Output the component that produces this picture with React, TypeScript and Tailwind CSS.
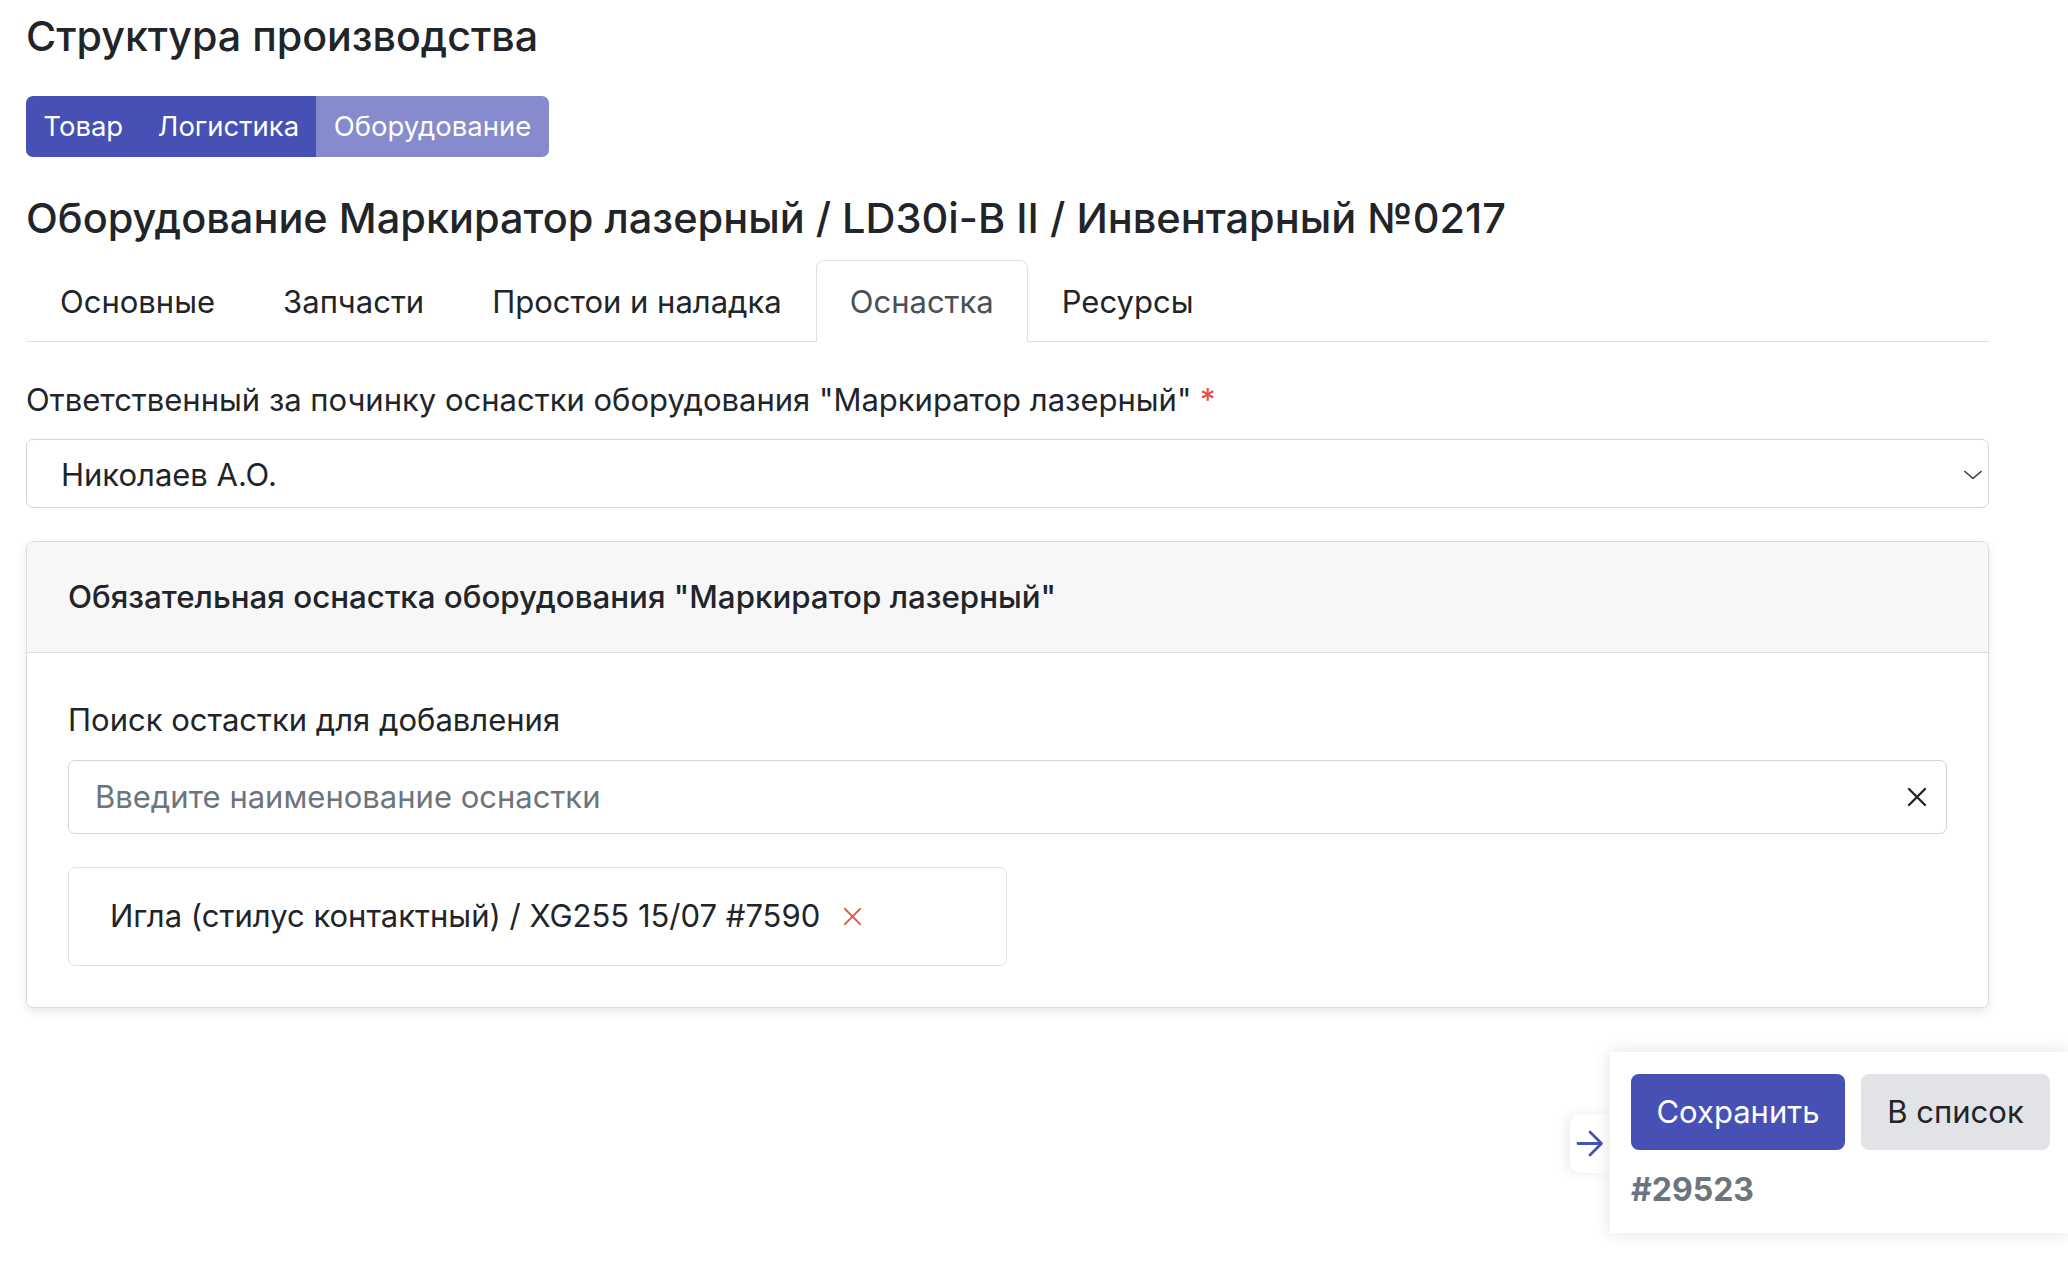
import { useState } from 'react';

const sections = ['Товар', 'Логистика', 'Оборудование'];
const tabs = ['Основные', 'Запчасти', 'Простои и наладка', 'Оснастка', 'Ресурсы'];

const Chevron = () => (
  <svg width="18" height="10" viewBox="0 0 18 10" fill="none" stroke="#343a40" strokeWidth="1.6" strokeLinecap="round" strokeLinejoin="round">
    <path d="M1 1.5l8 7 8-7" />
  </svg>
);

const Cross = ({ size, color, width }: { size: number; color: string; width: number }) => (
  <svg width={size} height={size} viewBox="0 0 20 20" fill="none" stroke={color} strokeWidth={width} strokeLinecap="round">
    <path d="M2 2l16 16M18 2L2 18" />
  </svg>
);

const App = () => {
  const [activeTab, setActiveTab] = useState('Оснастка');
  const [query, setQuery] = useState('');

  return (
    <div className="relative min-h-[1264px] bg-white pl-[26px] pr-[79px] pt-[12px] font-['Inter',sans-serif] text-[#212529]">
      <h1 className="text-[41.2px] font-medium leading-[48px]">Структура производства</h1>

      {/* section switcher */}
      <div className="mt-[36px] flex h-[61px] w-fit overflow-hidden rounded-[7px]">
        {sections.map((s) => (
          <button
            key={s}
            className={`px-[17.3px] text-[27.5px] leading-none text-white ${s === 'Оборудование' ? 'bg-[#858bcc]' : 'bg-[#4650b5]'}`}
          >
            {s}
          </button>
        ))}
      </div>

      <h2 className="mt-[37px] text-[41.5px] font-medium leading-[48px]">
        Оборудование Маркиратор лазерный / LD30i-B II / Инвентарный №0217
      </h2>

      {/* tabs */}
      <div className="mt-[18px] flex h-[82px] border-b border-[#dee2e6]">
        {tabs.map((t) => (
          <button
            key={t}
            onClick={() => setActiveTab(t)}
            className={`-mb-px px-[33px] text-[31px] leading-none border rounded-t-[8px] ${
              t === activeTab
                ? 'border-[#dee2e6] border-b-white bg-white text-[#495057]'
                : 'border-transparent text-[#212529]'
            }`}
          >
            {t}
          </button>
        ))}
      </div>

      <div className="mt-[35px] text-[31px] leading-[46px]">
        Ответственный за починку оснастки оборудования "Маркиратор лазерный"{' '}
        <span className="text-[#e74c3c]">*</span>
      </div>
      <div className="mt-[16px] flex h-[69px] items-center justify-between rounded-[7px] border border-[#ced4da] pl-[34px] pr-[6px] pt-[3px] text-[31px] text-[#212529]">
        <span>Николаев А.О.</span>
        <Chevron />
      </div>

      {/* required tooling card */}
      <div className="mt-[33px] overflow-hidden rounded-[7px] border border-[#dcdcdc] shadow-[0_4px_10px_rgba(0,0,0,0.09)]">
        <div className="flex h-[111px] items-center border-b border-[#dcdcdc] bg-[#f7f7f7] px-[41px] text-[31.3px] font-medium">
          Обязательная оснастка оборудования "Маркиратор лазерный"
        </div>
        <div className="px-[41px] pb-[41px] pt-[44px]">
          <div className="text-[31px] leading-[46px]">Поиск остастки для добавления</div>
          <div className="mt-[17px] flex h-[74px] items-center rounded-[7px] border border-[#ced4da] pl-[26px] pr-[19px]">
            <input
              value={query}
              onChange={(e) => setQuery(e.target.value)}
              placeholder="Введите наименование оснастки"
              className="flex-1 bg-transparent text-[31px] text-[#212529] outline-none placeholder:text-[#6c757d]"
            />
            <Cross size={20} color="#212529" width={2.4} />
          </div>
          <div className="mt-[33px] flex h-[99px] w-[939px] items-center gap-[23px] rounded-[7px] border border-[#dee2e6] px-[41px] text-[31px]">
            <span>Игла (стилус контактный) / XG255 15/07 #7590</span>
            <Cross size={19} color="#e8533a" width={2.1} />
          </div>
        </div>
      </div>

      {/* floating actions */}
      <div className="absolute bottom-[31px] right-0 flex">
        <div className="mt-[62px] flex h-[59px] w-[40px] items-center justify-center self-start rounded-l-[10px] bg-white shadow-[-4px_0_12px_rgba(0,0,0,0.08)]">
          <svg width="28" height="27" viewBox="0 0 28 27" fill="none" stroke="#4650b5" strokeWidth="2.8" strokeLinecap="round" strokeLinejoin="round">
            <path d="M2 13.5h23M14 2l11.5 11.5L14 25" />
          </svg>
        </div>
        <div className="w-[458px] bg-white pl-[21px] pr-[18px] pt-[22px] pb-[21px] shadow-[0_0_16px_rgba(0,0,0,0.12)]">
          <div className="flex gap-[16px]">
            <button className="h-[76px] w-[214px] rounded-[8px] bg-[#4650b5] text-[31px] text-white">Сохранить</button>
            <button className="h-[76px] w-[189px] rounded-[8px] bg-[#e2e3e7] text-[31px] text-[#212529]">В список</button>
          </div>
          <div className="mt-[18px] text-[32px] font-bold leading-[44px] text-[#6c757d]">#29523</div>
        </div>
      </div>
    </div>
  );
};

export default App;
